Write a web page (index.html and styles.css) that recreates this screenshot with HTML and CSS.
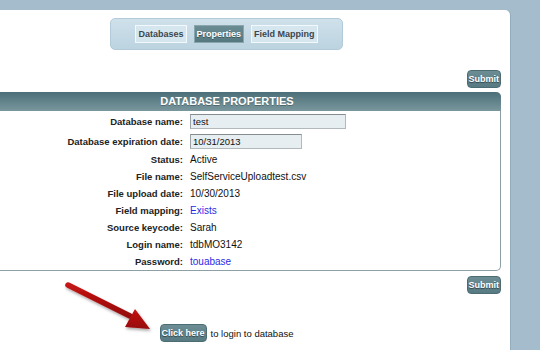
FILE: index.html
```html
<!DOCTYPE html>
<html lang="en">
<head>
  <meta charset="UTF-8" />
  <title>Database Properties</title>
  <link rel="stylesheet" href="styles.css">
</head>
<body>
  <div class="page">
    <div class="tabs-wrap">
      <div class="tabs">
        <button class="tab">Databases</button>
        <button class="tab active">Properties</button>
        <button class="tab">Field Mapping</button>
      </div>
    </div>

    <div class="actions top">
      <button class="btn">Submit</button>
    </div>

    <div class="props">
      <div class="props-head">DATABASE PROPERTIES</div>
      <div class="props-body">
        <div class="row tall">
          <span class="label">Database name:</span>
          <input class="field wide" type="text" value="test">
        </div>
        <div class="row tall">
          <span class="label">Database expiration date:</span>
          <input class="field" type="text" value="10/31/2013">
        </div>
        <div class="row">
          <span class="label">Status:</span>
          <span class="value">Active</span>
        </div>
        <div class="row">
          <span class="label">File name:</span>
          <span class="value">SelfServiceUploadtest.csv</span>
        </div>
        <div class="row">
          <span class="label">File upload date:</span>
          <span class="value">10/30/2013</span>
        </div>
        <div class="row">
          <span class="label">Field mapping:</span>
          <a class="value link" href="#">Exists</a>
        </div>
        <div class="row">
          <span class="label">Source keycode:</span>
          <span class="value">Sarah</span>
        </div>
        <div class="row">
          <span class="label">Login name:</span>
          <span class="value">tdbMO3142</span>
        </div>
        <div class="row">
          <span class="label">Password:</span>
          <a class="value link" href="#">touabase</a>
        </div>
      </div>
    </div>

    <div class="actions">
      <button class="btn">Submit</button>
    </div>

    <div class="login-line">
      <button class="btn">Click here</button>
      <span>to login to database</span>
    </div>
  </div>

  <svg class="arrow" width="100" height="70" viewBox="0 0 100 70">
    <defs>
      <filter id="shadow" x="-20%" y="-20%" width="140%" height="160%">
        <feDropShadow dx="1" dy="2" stdDeviation="1.6" flood-color="#000" flood-opacity="0.35"/>
      </filter>
      <linearGradient id="red" x1="0" y1="0" x2="0" y2="1">
        <stop offset="0" stop-color="#c41414"/>
        <stop offset="1" stop-color="#960808"/>
      </linearGradient>
    </defs>
    <g filter="url(#shadow)" fill="url(#red)">
      <line x1="8" y1="7" x2="70" y2="38" stroke="url(#red)" stroke-width="5.5" stroke-linecap="round"/>
      <polygon points="75,31 90,51 65,49"/>
    </g>
  </svg>
</body>
</html>
```

FILE: styles.css
```css
* { box-sizing: border-box; }

body {
  margin: 0;
  background: #a4bccc;
  font-family: 'Liberation Sans', Arial, sans-serif;
  color: #111;
  overflow: hidden;
  position: relative;
  height: 350px;
}

.page {
  margin-top: 10px;
  margin-left: -48px;
  width: 558px;
  height: 345px;
  background: #fff;
  border-top-right-radius: 5px;
  box-shadow: 1px 0 0 #93adbe;
  padding: 8px 9px 0 0;
}

.tabs-wrap {
  display: flex;
  justify-content: center;
}

.tabs {
  display: flex;
  gap: 7px;
  padding: 6px 24px;
  height: 32px;
  align-items: center;
  background: linear-gradient(#cfe1eb, #bcd3e0);
  border: 1px solid #b3cad8;
  border-radius: 5px;
}

.tab {
  height: 18px;
  padding: 0 2px;
  font-family: inherit;
  font-size: 9px;
  font-weight: bold;
  color: #3a4650;
  background: #d6e6ef;
  border: 1px solid #f2f8fb;
  cursor: pointer;
}

.tab.active {
  color: #fff;
  background: linear-gradient(#6b8c93, #557880);
  border-color: #8aa6ad;
  text-shadow: 0 1px 0 rgba(0, 0, 0, 0.35);
}

.actions {
  display: flex;
  justify-content: flex-end;
  margin-top: 5px;
}

.actions.top {
  margin-top: 20px;
}

.btn {
  height: 18px;
  padding: 0 1px;
  font-family: inherit;
  font-size: 9px;
  font-weight: bold;
  color: #fff;
  background: linear-gradient(#6c8d94, #587a82);
  border: 1px solid #4c6c74;
  border-radius: 4px;
  text-shadow: 0 1px 1px rgba(0, 0, 0, 0.5);
  cursor: pointer;
}

.props {
  margin-top: 4px;
  border: 1px solid #8e9fa5;
  border-top: none;
  border-radius: 0 5px 5px 0;
}

.props-head {
  height: 19px;
  line-height: 19px;
  text-align: center;
  font-size: 11px;
  font-weight: bold;
  color: #fff;
  background: linear-gradient(#4b6f78, #7a979d);
  border-top-right-radius: 5px;
  margin-right: -1px;
  text-shadow: 0 1px 0 rgba(0, 0, 0, 0.25);
}

.row {
  display: grid;
  grid-template-columns: 230px 1fr;
  column-gap: 7px;
  align-items: center;
  height: 17px;
  font-size: 10px;
}

.row.tall {
  height: 20px;
}

.label {
  text-align: right;
  font-weight: bold;
  font-size: 9.5px;
  color: #222;
}

.value {
  color: #111;
}

.link {
  color: #2b2be6;
  text-decoration: none;
}

.field {
  width: 112px;
  height: 15px;
  padding: 0 2px;
  font-family: inherit;
  font-size: 9.5px;
  color: #111;
  background: #e7eef1;
  border: 1px solid #b1b9bc;
  border-top-color: #858d90;
  border-left-color: #9aa2a5;
}

.field.wide {
  width: 156px;
}

.login-line {
  display: flex;
  justify-content: center;
  align-items: center;
  gap: 4px;
  margin-top: 30px;
  font-size: 9.5px;
}

.arrow {
  position: absolute;
  left: 60px;
  top: 278px;
}
```
